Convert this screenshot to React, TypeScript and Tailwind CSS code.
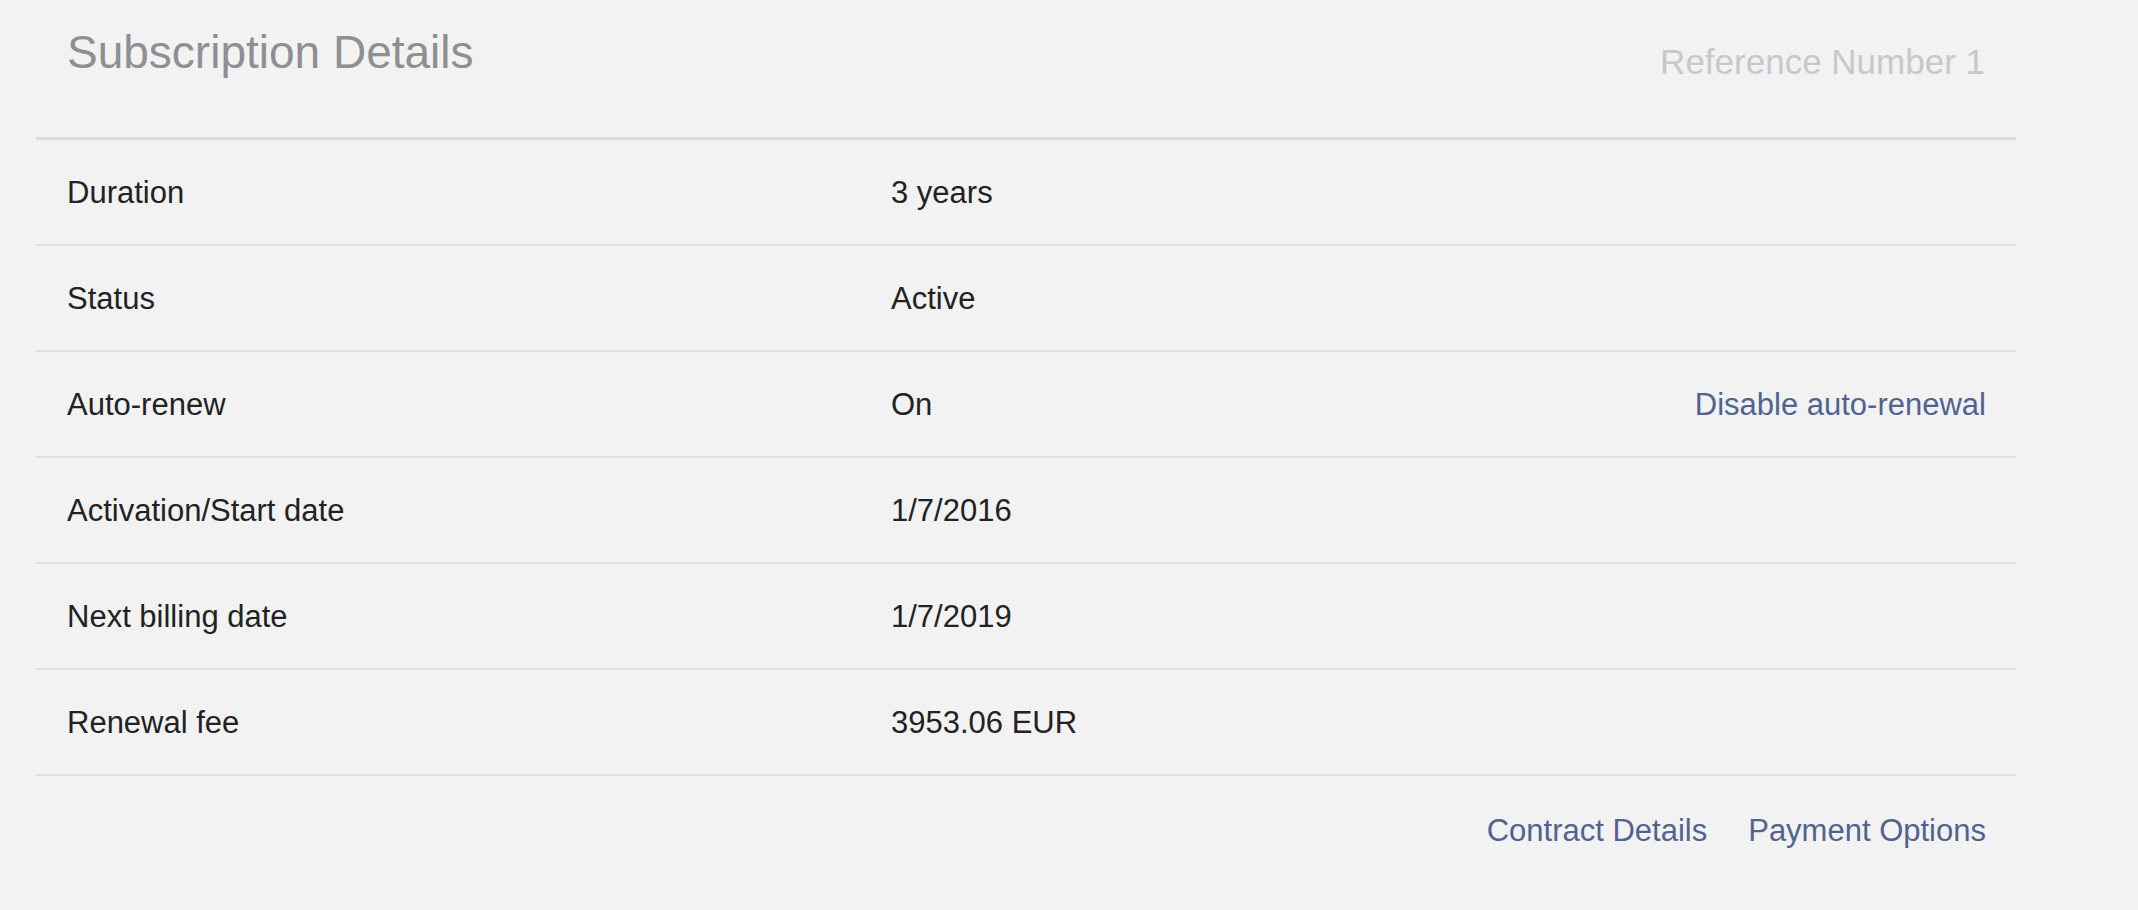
const rows: { label: string; value: string; action?: string }[] = [
  { label: "Duration", value: "3 years" },
  { label: "Status", value: "Active" },
  { label: "Auto-renew", value: "On", action: "Disable auto-renewal" },
  { label: "Activation/Start date", value: "1/7/2016" },
  { label: "Next billing date", value: "1/7/2019" },
  { label: "Renewal fee", value: "3953.06 EUR" },
];

export default function App() {
  return (
    <div
      className="min-h-[910px] w-full bg-[#f2f2f2] pl-[36px]"
      style={{ fontFamily: '"Liberation Sans", Arial, sans-serif' }}
    >
      <div className="w-[1980px]">
        <header className="flex h-[137px] items-start justify-between px-[31px]">
          <h1 className="pt-[29px] text-[46px] leading-none font-normal text-[#8e8e93]">Subscription Details</h1>
          <span className="pt-[44px] text-[35px] leading-none text-[#c7c7cc]">Reference Number 1</span>
        </header>

        <div className="border-t-[3px] border-[#dcdcdc]">
          {rows.map((r) => (
            <div
              key={r.label}
              className="grid h-[106px] grid-cols-[855px_1fr_auto] items-center border-b-2 border-[#dfdfdf] pt-[2px] text-[31px] text-[#222224]"
            >
              <span className="pl-[31px]">{r.label}</span>
              <span>{r.value}</span>
              {r.action ? (
                <a href="#" className="pr-[30px] text-[#52638f]">
                  {r.action}
                </a>
              ) : (
                <span />
              )}
            </div>
          ))}
        </div>

        <footer className="flex justify-end gap-[41px] pt-[32px] pr-[30px] text-[31px] text-[#52638f]">
          <a href="#">Contract Details</a>
          <a href="#">Payment Options</a>
        </footer>
      </div>
    </div>
  );
}
